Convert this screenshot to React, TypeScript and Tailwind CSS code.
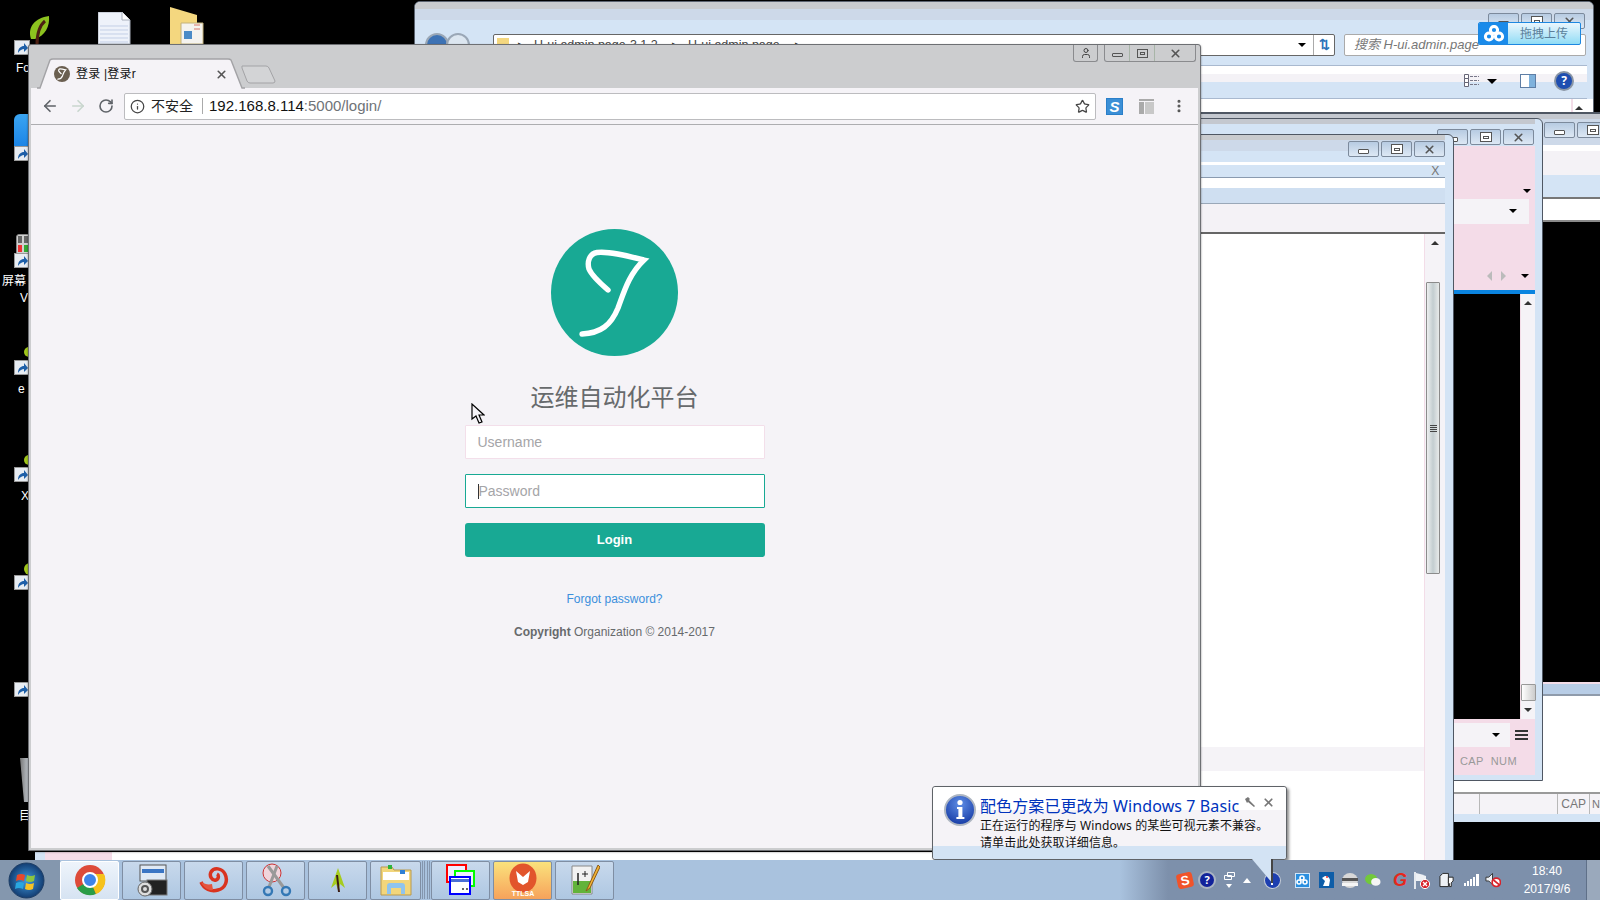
import { ArrowLeft, ArrowRight, Info, MoreVertical, RotateCw, Star, User, X } from 'lucide-react';

const cjk = "font-['Liberation_Sans','Noto_Sans_CJK_SC',sans-serif]";

function CaptionBtn({ kind, className = '' }: { kind: 'min' | 'max' | 'close'; className?: string }) {
  return (
    <div className={`flex h-[16px] w-[31px] items-center justify-center rounded-[2px] border border-[#7c8a9c] bg-gradient-to-b from-[#b7cbe2] to-[#dde8f4] ${className}`}>
      {kind === 'min' && <div className="mt-1 h-[5px] w-[11px] rounded-[1px] border border-[#555] bg-white" />}
      {kind === 'max' && <div className="flex h-[10px] w-[12px] items-center justify-center border border-[#555] bg-white"><div className="h-[3px] w-[6px] border border-[#555]" /></div>}
      {kind === 'close' && <X size={13} strokeWidth={3} className="text-[#555]" />}
    </div>
  );
}

function Caret({ className = '' }: { className?: string }) {
  return <div className={`absolute h-0 w-0 border-x-[4px] border-t-[4px] border-x-transparent border-t-black ${className}`} />;
}

function Shortcut({ top }: { top: string }) {
  return (
    <div className={`absolute left-[14px] flex h-[15px] w-[16px] items-center justify-center border border-[#999] bg-[#e8edf3] ${top}`}>
      <svg width="12" height="12" viewBox="0 0 12 12"><path d="M2 11C2 6 5 4 8 4V1l4 5-4 4V7C6 7 4 8 2 11z" fill="#1d5fa8" /></svg>
    </div>
  );
}

function DesktopIcons() {
  return (
    <>
      <svg className="absolute left-[27px] top-[15px]" width="24" height="30" viewBox="0 0 24 30">
        <path d="M4 24C0 12 8 3 22 1c1 10-4 20-14 23z" fill="#8cc21f" />
        <path d="M10 30C10 18 13 10 18 6" stroke="#4c1f12" strokeWidth="3" fill="none" />
      </svg>
      <svg className="absolute left-[98px] top-[12px]" width="33" height="32" viewBox="0 0 33 32">
        <path d="M0 0h24l8 8v24H0z" fill="#eef2fa" stroke="#a9b0bc" />
        <path d="M2 14h28M2 18h28M2 22h28M2 26h28M2 30h28" stroke="#c3cfe6" />
        <path d="M24 0v8h8" fill="#fff" stroke="#a9b0bc" />
      </svg>
      <svg className="absolute left-[170px] top-[7px]" width="34" height="37" viewBox="0 0 34 37">
        <path d="M0 0l27 8v29H0z" fill="#f4d77f" />
        <path d="M11 16h22v21H11z" fill="#f5f3ef" stroke="#c4b27c" />
        <path d="M14 24h8v8h-8z" fill="#4b8bc7" />
        <path d="M24 18h6M24 22h6" stroke="#d8776b" />
      </svg>
      <div className="absolute left-[14px] top-[114px] h-[32px] w-[16px] rounded-tl-[6px] bg-gradient-to-b from-[#3ba5f2] to-[#1b85e6]" />
      <div className="absolute left-[16px] top-[234px] grid h-[20px] w-[14px] grid-cols-2 gap-[2px] rounded-tl-[3px] border border-[#888] bg-[#d0d0d0] p-[1px]">
        <div className="bg-[#666]" /><div className="bg-[#666]" /><div className="bg-[#e33]" /><div className="bg-[#3a3]" />
      </div>
      <div className="absolute left-[24px] top-[347px] h-[10px] w-[6px] rounded-l-full bg-[#a3c91c]" />
      <div className="absolute left-[24px] top-[455px] h-[10px] w-[6px] rounded-l-full bg-[#a3c91c]" />
      <div className="absolute left-[24px] top-[563px] h-[12px] w-[6px] rounded-l-full bg-[#a3c91c]" />
      <div className="absolute left-[20px] top-[758px] h-[44px] w-[10px] bg-gradient-to-r from-[#777] to-[#cfd6de] [clip-path:polygon(0_0,100%_0,100%_100%,40%_100%)]" />
      {['top-[40px]', 'top-[146px]', 'top-[253px]', 'top-[360px]', 'top-[467px]', 'top-[575px]', 'top-[682px]'].map(t => <Shortcut key={t} top={t} />)}
      <span className={`absolute left-[16px] top-[59px] text-[12px] text-white ${cjk}`}>Fo</span>
      <span className={`absolute left-[2px] top-[272px] text-[12px] text-white ${cjk}`}>屏幕</span>
      <span className={`absolute left-[20px] top-[289px] text-[12px] text-white ${cjk}`}>V</span>
      <span className={`absolute left-[18px] top-[380px] text-[12px] text-white ${cjk}`}>e</span>
      <span className={`absolute left-[21px] top-[487px] text-[12px] text-white ${cjk}`}>X</span>
      <span className={`absolute left-[19px] top-[807px] text-[12px] text-white ${cjk}`}>目</span>
    </>
  );
}

function ExplorerWindow() {
  return (
    <div className="absolute left-[414px] top-[1px] flex h-[140px] w-[1180px] flex-col overflow-hidden rounded-t-[6px] border border-[#5c6470] bg-[#d4e4f5]">
      <div className="h-[7px] shrink-0 bg-[#c9cbce]" />
      <div className="h-[11px] shrink-0 bg-[#cdd9e9]" />
      <div className="absolute right-[8px] top-[11px] flex gap-[2px]">
        <CaptionBtn kind="min" /><CaptionBtn kind="max" /><CaptionBtn kind="close" />
      </div>
      <div className="flex h-[43px] shrink-0 items-center pl-[10px] pr-[7px] pt-[7px]">
        <div className="h-[24px] w-[24px] rounded-full border-2 border-[#9aa7b6] bg-[#3d72b4]" />
        <div className="-ml-[3px] h-[24px] w-[24px] rounded-full border-2 border-[#9aa7b6] bg-[#dce6f0]" />
        <div className="relative ml-[23px] flex h-[22px] w-[842px] items-center rounded-[2px] border border-[#666] bg-white pl-[3px]">
          <div className="h-[14px] w-[12px] bg-[#f4d77f]" />
          <span className="ml-[9px] text-[13px] text-[#333]">▸</span>
          <span className={`ml-[9px] w-[138px] whitespace-nowrap text-[12.5px] text-[#444] ${cjk}`}>H-ui.admin.page-3.1.2</span>
          <span className="text-[13px] text-[#333]">▸</span>
          <span className={`ml-[9px] w-[107px] whitespace-nowrap text-[12.5px] text-[#444] ${cjk}`}>H-ui.admin.page</span>
          <span className="text-[13px] text-[#333]">▸</span>
          <Caret className="right-[28px] top-[8px] border-t-[#123]" />
          <div className="absolute right-0 top-0 flex h-full w-[21px] items-center justify-center border-l border-[#aaa] text-[13px] font-bold text-[#2b72b8]">⇅</div>
        </div>
        <div className="ml-[9px] flex h-[22px] w-[242px] items-center rounded-[2px] border border-[#aaa] bg-white pl-[9px]">
          <span className={`text-[13px] italic text-[#777] ${cjk}`}>搜索 H-ui.admin.page</span>
        </div>
      </div>
      <div className="h-[2px] shrink-0" />
      <div className="relative mr-[6px] shrink-0 border-y border-[#a9b9cf]">
        <div className="h-[8px] bg-white" />
        <div className="h-[8px] bg-[#f4f2f6]" />
        <div className="h-[16px] bg-[#d4e4f5]" />
        <svg className="absolute right-[107px] top-[8px]" width="16" height="14" viewBox="0 0 16 14">
          <path d="M0.5 0.5h4v4h-4zM0.5 4.5h4v4h-4zM0.5 8.5h4v4h-4z" fill="#fff" stroke="#667" />
          <path d="M6 2.5h9M6 6.5h9M6 10.5h9" stroke="#778" strokeDasharray="3 1" />
        </svg>
        <Caret className="right-[90px] top-[13px] border-x-[5px] border-t-[5px] border-t-[#123070]" />
        <div className="absolute right-[51px] top-[8px] flex h-[14px] w-[16px] border border-[#5e7ea5] bg-white">
          <div className="flex-1" />
          <div className="w-[6px] bg-[#7fb2dc]" />
        </div>
        <div className="absolute right-[15px] top-[7px] flex h-[16px] w-[16px] items-center justify-center rounded-full bg-[#1f4eb0] text-[12px] font-bold text-white ring-2 ring-[#8a96a5]">?</div>
      </div>
      <div className="relative flex-1 bg-white">
        <div className="absolute right-[20px] top-0 h-full w-[2px] bg-[#f3dde8]" />
        <div className="absolute right-[10px] top-[7px] h-0 w-0 border-x-[4px] border-b-[4px] border-x-transparent border-b-[#333]" />
      </div>
    </div>
  );
}

function RearRightWindow() {
  return (
    <div className="absolute left-[1190px] top-[112px] flex h-[710px] w-[410px] flex-col border-t-2 border-[#4f5763] bg-[#d4e4f5]">
      <div className="h-[5px] bg-[#c4c8cf]" />
      <div className="relative h-[26px] bg-[#cdd9e9]">
        <div className="absolute left-[354px] top-[3px] flex gap-[2px]"><CaptionBtn kind="min" /><CaptionBtn kind="max" /></div>
      </div>
      <div className="h-[6px] bg-white" />
      <div className="h-[24px] bg-[#f4f2f6]" />
      <div className="h-[22px] bg-[#d4e4f5]" />
      <div className="h-[2px] bg-[#777]" />
      <div className="h-[21px] bg-white" />
      <div className="h-[2px] bg-[#8a8a8a]" />
      <div className="h-[460px] bg-black" />
      <div className="h-[2px] bg-[#f3dde8]" />
      <div className="h-[10px] bg-[#b8cde6]" />
      <div className="h-[2px] bg-[#8f9bab]" />
      <div className="h-[96px] bg-white" />
      <div className="h-[2px] bg-[#9a9a9a]" />
      <div className="flex h-[20px] items-center bg-[#f5f3f7]">
        <div className="ml-[289px] h-full w-[81px] border-x border-[#b8b8b8]" />
        <span className={`ml-[3px] text-[12px] text-[#777] ${cjk}`}>CAP</span>
        <div className="ml-[3px] h-full w-0 border-l border-[#b8b8b8]" />
        <span className={`ml-[2px] text-[11px] text-[#777] ${cjk}`}>N</span>
      </div>
      <div className="flex-1 bg-[#d4e4f5]" />
    </div>
  );
}

function PinkWindow() {
  return (
    <div className="absolute left-[1190px] top-[118px] flex h-[663px] w-[353px] flex-col rounded-tr-[6px] border border-[#4f5763] bg-[#d4e4f5] pr-[7px]">
      <div className="absolute right-[8px] top-[10px] flex gap-[2px]">
        <CaptionBtn kind="min" /><CaptionBtn kind="max" /><CaptionBtn kind="close" />
      </div>
      <div className="h-[5px] shrink-0 bg-[#c4c8cf]" />
      <div className="h-[22px] shrink-0" />
      <div className="relative h-[144px] shrink-0 bg-[#f4dce8]">
        <Caret className="right-[4px] top-[43px]" />
        <div className="absolute right-[6px] top-[53px] h-[25px] w-[100px] bg-[#f5f3f7]" />
        <Caret className="right-[18px] top-[63px]" />
        <div className="absolute right-[43px] top-[125px] h-0 w-0 border-y-[5px] border-r-[5px] border-y-transparent border-r-[#bbb]" />
        <div className="absolute right-[29px] top-[125px] h-0 w-0 border-y-[5px] border-l-[5px] border-y-transparent border-l-[#bbb]" />
        <Caret className="right-[6px] top-[128px]" />
      </div>
      <div className="h-[4px] shrink-0 bg-[#0a84e0]" />
      <div className="flex h-[425px] shrink-0">
        <div className="flex-1 bg-black" />
        <div className="relative w-[15px] border-l border-[#f3dde8] bg-[#f5f3f7]">
          <div className="absolute left-[3px] top-[7px] h-0 w-0 border-x-[4px] border-b-[4px] border-x-transparent border-b-[#333]" />
          <div className="absolute bottom-[18px] left-0 h-[17px] w-[15px] rounded-[1px] border border-[#999] bg-gradient-to-r from-white to-[#ccc]" />
          <div className="absolute bottom-[7px] left-[3px] h-0 w-0 border-x-[4px] border-t-[4px] border-x-transparent border-t-[#333]" />
        </div>
      </div>
      <div className="relative flex-1 bg-[#f4dce8]">
        <div className="absolute right-[25px] top-[4px] h-[24px] w-[100px] bg-[#f5f3f7]" />
        <Caret className="right-[35px] top-[14px]" />
        <div className="absolute right-[7px] top-[11px] flex w-[13px] flex-col gap-[2px]">
          <div className="h-[2px] bg-[#333]" /><div className="h-[2px] bg-[#333]" /><div className="h-[2px] bg-[#333]" />
        </div>
        <span className={`absolute left-[269px] top-[34px] text-[11px] tracking-[0.4px] text-[#999] ${cjk}`}>CAP&nbsp;&nbsp;NUM</span>
      </div>
      <div className="h-[5px] shrink-0" />
    </div>
  );
}

function EditorWindow() {
  return (
    <div className="absolute left-[1160px] top-[134px] flex h-[730px] w-[294px] flex-col rounded-tr-[6px] border border-[#4f5763] bg-[#d4e4f5] pr-[8px]">
      <div className="h-[5px] shrink-0 bg-[#c9cbce]" />
      <div className="h-[11px] shrink-0 bg-[#cdd9e9]" />
      <div className="absolute right-[8px] top-[6px] flex gap-[2px]">
        <CaptionBtn kind="min" /><CaptionBtn kind="max" /><CaptionBtn kind="close" />
      </div>
      <div className="h-[11px] shrink-0" />
      <div className="h-[3px] shrink-0 bg-white" />
      <div className="flex h-[13px] shrink-0 items-center justify-end border-b border-[#8a9bb0] bg-[#d4e4f5] pr-[6px] text-[13px] text-[#777]">X</div>
      <div className="h-[10px] shrink-0 bg-white" />
      <div className="h-[15px] shrink-0 bg-[#cfdff1]" />
      <div className="h-[29px] shrink-0 border-t border-[#9aa8b8] bg-[#f4f2f6]" />
      <div className="h-[2px] shrink-0 bg-[#666]" />
      <div className="flex min-h-0 flex-1">
        <div className="flex flex-1 flex-col bg-white">
          <div className="flex-1" />
          <div className="h-[24px] bg-[#f5f3f7]" />
          <div className="h-[92px]" />
        </div>
        <div className="relative w-[21px] border-l border-[#f3dde8] bg-[#f5f3f7]">
          <div className="absolute left-[6px] top-[7px] h-0 w-0 border-x-[4px] border-b-[4px] border-x-transparent border-b-[#333]" />
          <div className="absolute left-[1px] top-[48px] flex h-[292px] w-[14px] items-center justify-center rounded-[1px] border border-[#8b8b8b] bg-gradient-to-r from-[#eef0f0] via-[#c3cdd0] to-[#e8eaea]">
            <div className="flex w-[7px] flex-col gap-[1px]">
              <div className="h-[1px] bg-[#444]" /><div className="h-[1px] bg-[#444]" /><div className="h-[1px] bg-[#444]" /><div className="h-[1px] bg-[#444]" />
            </div>
          </div>
        </div>
      </div>
    </div>
  );
}

function Logo({ size, bg, width = 5.4 }: { size: number; bg: string; width?: number }) {
  return (
    <svg width={size} height={size} viewBox="0 0 127 127" className="block shrink-0">
      <circle cx="63.5" cy="63.5" r="63.5" fill={bg} />
      <path d="M31 105C50 104 60 96 67 79C73 63 78 45 93 31C77 27 58 22 46 23.5C38 25 36 33 38 40C41 47 50 55 57 61" fill="none" stroke="#fff" strokeWidth={width} strokeLinecap="round" strokeLinejoin="miter" />
    </svg>
  );
}

function BrowserWindow() {
  return (
    <div className="absolute left-[28px] top-[44px] flex h-[807px] w-[1173px] flex-col rounded-t-[3px] border border-[#6d6f73] bg-[#cccdcf] px-[2px] pb-[2px] shadow-[0_1px_2px_rgba(0,0,0,0.5)]">
      <div className="relative h-[43px] shrink-0">
        <svg className="absolute left-[6px] top-[13px]" width="208" height="31" viewBox="0 0 208 31">
          <path d="M0 30h3L13 2q1-1 3-1h175q2 0 3 1l11 28h3" fill="#f5f3f7" stroke="#a3a3a6" strokeWidth="1.4" />
        </svg>
        <svg className="absolute left-[210px] top-[20px]" width="36" height="19" viewBox="0 0 36 19">
          <path d="M1 1h24q2 0 3 2l6 13q0 2-2 2H9q-2 0-3-2L1 3z" fill="#d3d4d6" stroke="#a3a3a6" />
        </svg>
        <div className="absolute left-[23px] top-[20px] flex h-[18px] items-center gap-[6px]">
          <Logo size={16} bg="#6a5f50" width={10} />
          <span className={`text-[12px] tracking-[0.2px] text-[#111] ${cjk}`}>登录 |登录r</span>
        </div>
        <X size={13} strokeWidth={3} className="absolute left-[184px] top-[23px] text-[#555]" />
        <div className="absolute right-[2px] top-[0px] flex gap-[6px]">
          <div className="flex h-[17px] w-[25px] items-center justify-center rounded-b-[3px] border border-t-0 border-[#8a8b8e]">
            <User size={12} strokeWidth={2} className="text-[#444]" />
          </div>
          <div className="flex h-[17px] w-[92px] rounded-b-[3px] border border-t-0 border-[#8a8b8e]">
            <div className="flex w-[25px] items-center justify-center border-r border-[#a8b5a8]"><div className="mt-1 h-[4px] w-[11px] rounded-[1px] border border-[#555]" /></div>
            <div className="flex w-[25px] items-center justify-center border-r border-[#a8b5a8]"><div className="flex h-[9px] w-[11px] items-center justify-center border border-[#555]"><div className="h-[3px] w-[5px] border border-[#555]" /></div></div>
            <div className="flex flex-1 items-center justify-center"><X size={13} strokeWidth={3} className="text-[#555]" /></div>
          </div>
        </div>
      </div>
      <div className="flex h-[37px] shrink-0 items-center border-b border-[#adadb0] bg-[#f5f3f7]">
        <ArrowLeft size={18} strokeWidth={2.2} className="ml-[10px] text-[#5f6368]" />
        <ArrowRight size={18} strokeWidth={2.2} className="ml-[10px] text-[#c9d6ce]" />
        <RotateCw size={16} strokeWidth={2.4} className="ml-[11px] text-[#5f6368]" />
        <div className="ml-[10px] flex h-[27px] w-[972px] items-center rounded-[2px] border border-[#bcbcbf] bg-white">
          <Info size={15} strokeWidth={2} className="ml-[5px] text-[#444]" />
          <span className={`ml-[6px] text-[14px] text-[#222] ${cjk}`}>不安全</span>
          <div className="ml-[9px] h-[16px] w-px bg-[#aaa]" />
          <span className="ml-[6px] font-['Liberation_Sans',sans-serif] text-[15px] text-[#111]">192.168.8.114<span className="text-[#6f7377]">:5000/login/</span></span>
          <Star size={15} strokeWidth={2} className="ml-auto mr-[5px] text-[#444]" />
        </div>
        <div className="ml-[10px] flex h-[17px] w-[17px] items-center justify-center border border-[#2a7fc9] bg-[#3b8fd6]">
          <span className="font-['Liberation_Sans',sans-serif] text-[15px] font-bold italic leading-none text-white">S</span>
        </div>
        <div className="ml-[16px] flex h-[15px] w-[15px] flex-col gap-[1px]">
          <div className="h-[2px] bg-[#aaa]" />
          <div className="flex flex-1 gap-[1px]"><div className="w-[5px] bg-[#aaa]" /><div className="flex-1 bg-[#c8c8c8]" /></div>
        </div>
        <MoreVertical size={16} strokeWidth={2.6} className="ml-[17px] text-[#555]" />
      </div>
      <div className="relative flex min-h-0 flex-1 flex-col items-center bg-[#f5f3f7] pt-[104px] font-['Liberation_Sans','Noto_Sans_CJK_SC',sans-serif] text-[#676a6c]">
        <Logo size={127} bg="#18a994" />
        <h3 className="mt-[28px] text-[24px] leading-[28px] text-[#676a6c]">运维自动化平台</h3>
        <input readOnly placeholder="Username" className="mt-[13px] h-[34px] w-[300px] rounded-[1px] border border-[#f3dfea] bg-white px-[12px] text-[14px] outline-none placeholder:text-[#a5a5a8]" />
        <div className="mt-[15px] flex h-[34px] w-[300px] items-center rounded-[1px] border border-[#18a994] bg-white px-[12px]">
          <div className="h-[15px] w-px bg-[#333]" />
          <span className="text-[14px] text-[#a5a5a8]">Password</span>
        </div>
        <button className="mt-[15px] h-[34px] w-[300px] rounded-[3px] bg-[#18a994] text-[13px] font-bold text-white">Login</button>
        <a className="mt-[33px] text-[12px] leading-[18px] text-[#3b8fdc]">Forgot password?</a>
        <p className="mt-[15px] text-[12px] leading-[18px]"><strong>Copyright</strong> Organization © 2014-2017</p>
        <svg className="absolute left-[440px] top-[278px]" width="14" height="21" viewBox="0 0 14 21">
          <path d="M1 1v15l4-3 3 7 3-1-3-7h5z" fill="#f5f3f7" stroke="#000" strokeWidth="1.2" />
        </svg>
      </div>
    </div>
  );
}

function Balloon() {
  return (
    <div className="absolute left-[932px] top-[786px] flex h-[74px] w-[355px] flex-col rounded-[3px] border border-[#5f6368] bg-[#f5f3f7] shadow-[2px_2px_3px_rgba(0,0,0,0.45)]">
      <div className="h-[23px] rounded-t-[3px] bg-white" />
      <div className="flex-1" />
      <div className="h-[13px] rounded-b-[3px] bg-[#d3e3f4]" />
      <svg className="absolute left-[11px] top-[7px]" width="32" height="32" viewBox="0 0 32 32">
        <defs>
          <radialGradient id="ib" cx="0.5" cy="0.3" r="0.8"><stop offset="0" stopColor="#5f8ee6" /><stop offset="1" stopColor="#0c2f9c" /></radialGradient>
        </defs>
        <circle cx="16" cy="16" r="15" fill="url(#ib)" stroke="#aeb6c2" strokeWidth="2" />
        <circle cx="16" cy="8.5" r="2.6" fill="#fff" />
        <path d="M13 13h5.4v10h2v2h-8v-2h2v-8h-1.4z" fill="#fff" />
      </svg>
      <div className="absolute left-[47px] top-[8px] flex flex-col font-['Noto_Sans','Noto_Sans_CJK_SC',sans-serif] whitespace-nowrap">
        <span className="text-[16px] leading-[22px] tracking-[0.1px] text-[#0033bc]">配色方案已更改为 Windows 7 Basic</span>
        <span className="mt-[1px] text-[12px] leading-[16px] tracking-[0.1px] text-[#111]">正在运行的程序与 Windows 的某些可视元素不兼容。</span>
        <span className="mt-[1px] text-[12px] leading-[16px] tracking-[0.1px] text-[#111]">请单击此处获取详细信息。</span>
      </div>
      <svg className="absolute right-[30px] top-[9px]" width="12" height="12" viewBox="0 0 12 12">
        <path d="M1 3l3-2 2 2-1 1 6 6-1 1-6-5-1 1z" fill="#777" />
      </svg>
      <X size={13} strokeWidth={3.2} className="absolute right-[11px] top-[9px] text-[#777]" />
    </div>
  );
}

const taskBtn = 'flex h-[39px] w-[59px] ml-[3px] items-center justify-center rounded-[2px] border border-[#7f8ea3] bg-gradient-to-b from-[#c8d9ec] to-[#aec7e2]';
const traySlot = 'flex w-[16px] shrink-0 items-center justify-center';

function Taskbar() {
  return (
    <div className="relative flex h-[40px] shrink-0 items-center bg-gradient-to-r from-[#a9c2de] from-70% to-[#7d90ab] to-[73%]">
      <div className="flex h-full w-[60px] shrink-0 items-center bg-[#8497ae] pl-[8px]">
        <svg width="37" height="37" viewBox="0 0 37 37">
          <defs><radialGradient id="orb" cx="0.5" cy="0.5" r="0.6"><stop offset="0" stopColor="#3f9be0" /><stop offset="1" stopColor="#0a2a5c" /></radialGradient></defs>
          <circle cx="18.5" cy="18.5" r="17.5" fill="url(#orb)" stroke="#1f3f66" />
          <path d="M9 13q4-2 8 0l-1 6q-4-2-8 0z" fill="#e8492b" />
          <path d="M19 13q4 2 8 0l-1 6q-4 2-8 0z" fill="#8cc63f" />
          <path d="M8 21q4-2 8 0l-1 6q-4-2-8 0z" fill="#29a7e1" />
          <path d="M18 21q4 2 8 0l-1 6q-4 2-8 0z" fill="#f7c325" />
        </svg>
      </div>
      <div className={`${taskBtn} !ml-0 border-[#fff] !from-[#eef4fb] !to-[#d6e3f2]`}>
        <svg width="32" height="32" viewBox="0 0 32 32">
          <circle cx="16" cy="16" r="15" fill="#dd4b39" />
          <path d="M16 16L3 24A15 15 0 0 0 22 30z" fill="#2a9d47" />
          <path d="M16 16l6 14A15 15 0 0 0 30 10H16z" fill="#f6c21b" />
          <circle cx="16" cy="16" r="7" fill="#3f84e8" stroke="#fff" strokeWidth="2" />
        </svg>
      </div>
      <div className={taskBtn}>
        <svg width="34" height="34" viewBox="0 0 34 34">
          <rect x="5" y="2" width="26" height="16" fill="#dfe9f5" stroke="#555" />
          <rect x="7" y="6" width="22" height="4" fill="#3a75c4" />
          <rect x="12" y="17" width="20" height="15" fill="#222" stroke="#777" />
          <circle cx="10" cy="26" r="7" fill="#ddd" stroke="#666" />
          <circle cx="10" cy="26" r="3" fill="none" stroke="#555" strokeWidth="2" />
        </svg>
      </div>
      <div className={taskBtn}>
        <svg width="30" height="26" viewBox="0 0 30 26">
          <path d="M2 15c3 7 10 10 17 8 8-2 10-10 7-16C23 1 15 0 12 5c-2 4 1 9 5 8 3-1 3-5 1-6" fill="none" stroke="#d9331f" strokeWidth="3.5" />
          <path d="M2 15c4 2 7 3 11 2l1 6c-5 1-10-3-12-8z" fill="#e4553f" />
        </svg>
      </div>
      <div className={taskBtn}>
        <svg width="32" height="34" viewBox="0 0 32 34">
          <circle cx="12" cy="10" r="9" fill="#f0d5dc" stroke="#c33" />
          <path d="M8 3l16 22" stroke="#999" strokeWidth="3" />
          <path d="M17 3L9 24" stroke="#999" strokeWidth="3" />
          <circle cx="8" cy="28" r="4" fill="none" stroke="#3478b5" strokeWidth="2.4" />
          <circle cx="26" cy="28" r="4" fill="none" stroke="#3478b5" strokeWidth="2.4" />
        </svg>
      </div>
      <div className={taskBtn}>
        <svg width="16" height="24" viewBox="0 0 16 24">
          <path d="M8 0l7 20-5-4-2 6-2-6-5 4z" fill="#a6cc1e" />
          <path d="M7 7l2 17" stroke="#3a1c12" strokeWidth="2" />
        </svg>
      </div>
      <div className={`${taskBtn} !w-[51px]`}>
        <svg width="32" height="32" viewBox="0 0 32 32">
          <path d="M1 3h11l2 3h17v25H1z" fill="#f2d67c" stroke="#b99a4e" />
          <rect x="3" y="8" width="26" height="8" fill="#fff" />
          <rect x="8" y="1" width="4" height="4" fill="#2db33a" />
          <rect x="20" y="6" width="5" height="4" fill="#2f80d6" />
          <path d="M7 30v-8q0-3 3-3h12q3 0 3 3v8h-4v-6H11v6z" fill="#8fc4ee" />
        </svg>
      </div>
      <div className="ml-[1px] h-[38px] w-[3px] border-x border-[#8496ae]" />
      <div className="ml-[2px] h-[38px] w-[3px] border-x border-[#8496ae]" />
      <div className={`${taskBtn} !ml-[1px]`}>
        <svg width="30" height="32" viewBox="0 0 30 32">
          <rect x="1" y="1" width="19" height="17" fill="#eef" stroke="#f00" strokeWidth="2" />
          <rect x="9" y="7" width="19" height="15" fill="#eef" stroke="#0f0" strokeWidth="2" />
          <rect x="4" y="13" width="20" height="17" fill="#fff" stroke="#00f" strokeWidth="2" />
          <rect x="5" y="15" width="18" height="3" fill="#4a6fd6" />
          <path d="M16 25h2M20 25h2" stroke="#666" strokeWidth="2" />
        </svg>
      </div>
      <div className={`${taskBtn} !from-[#f9e27c] !to-[#f6a25b]`}>
        <svg width="34" height="36" viewBox="0 0 34 36">
          <ellipse cx="17" cy="16" rx="13.5" ry="14.5" fill="#e2552c" />
          <path d="M10 9l7 6 7-6-2 11-5 3-5-3z" fill="#fff" />
          <text x="17" y="34" textAnchor="middle" fontSize="7" fontWeight="700" fill="#fff" fontFamily="Liberation Sans, sans-serif">TTLSA</text>
        </svg>
      </div>
      <div className={taskBtn}>
        <svg width="30" height="34" viewBox="0 0 30 34">
          <path d="M2 3h20v28H2z" fill="#f2f2f2" stroke="#888" />
          <path d="M3 18h18v12H3z" fill="#62b33a" />
          <path d="M8 10v12" stroke="#222" strokeWidth="1.5" />
          <path d="M12 11h6M15 8v6" stroke="#222" />
          <path d="M28 2L18 24l-2 4 4-3L30 4z" fill="#f2b334" stroke="#8a5a1a" />
        </svg>
      </div>

      <div className="ml-auto flex h-full items-center">
        <div className={traySlot}>
          <div className={`flex h-[15px] w-[16px] -rotate-12 items-center justify-center rounded-[3px] bg-[#f0532a] text-[13px] font-bold text-white ${cjk}`}>S</div>
        </div>
        <div className={`${traySlot} ml-[6px]`}>
          <div className="flex h-[14px] w-[14px] items-center justify-center rounded-full bg-[#11229a] text-[11px] font-bold text-white ring-2 ring-[#aab4c2]">?</div>
        </div>
        <div className={`${traySlot} ml-[6px] flex-col gap-[4px]`}>
          <svg width="11" height="8" viewBox="0 0 11 8"><path d="M3.5 0.5h7v4h-7zM0.5 3.5h7v4h-7z" fill="#7d90ab" stroke="#fff" /></svg>
          <div className="h-0 w-0 border-x-[3px] border-t-[4px] border-x-transparent border-t-white" />
        </div>
        <div className={`${traySlot} ml-[2px]`}>
          <div className="h-0 w-0 border-x-[4px] border-b-[5px] border-x-transparent border-b-white" />
        </div>
        <div className={`${traySlot} ml-[9px]`}>
          <div className="flex h-[15px] w-[15px] items-center justify-center rounded-full bg-[#1d3fb0] ring-1 ring-[#c4ccd8]"><div className="h-[9px] w-[2px] bg-white" /></div>
        </div>
        <div className={`${traySlot} ml-[14px]`}>
          <div className="flex h-[15px] w-[15px] items-center justify-center border border-[#cfe6fa] bg-[#2a8fe0]">
            <svg width="12" height="10" viewBox="0 0 12 10"><g fill="none" stroke="#fff" strokeWidth="1.6"><circle cx="6" cy="3" r="2" /><circle cx="3" cy="7" r="2" /><circle cx="9" cy="7" r="2" /></g></svg>
          </div>
        </div>
        <div className={`${traySlot} ml-[8px]`}>
          <svg width="15" height="16" viewBox="0 0 15 16"><rect width="15" height="16" fill="#0d5da8" /><path d="M6 4q4 0 5 4l-1 6H4l2-5-3-3z" fill="#fff" /><circle cx="8" cy="5" r="1" fill="#e33" /></svg>
        </div>
        <div className={`${traySlot} ml-[8px]`}>
          <svg width="16" height="15" viewBox="0 0 16 15"><ellipse cx="8" cy="7.5" rx="8" ry="7.5" fill="#d8d8d8" /><rect y="5" width="16" height="3" fill="#555" /><rect y="10" width="16" height="3" fill="#f5f5f5" /></svg>
        </div>
        <div className={`${traySlot} ml-[7px]`}>
          <svg width="17" height="14" viewBox="0 0 17 14"><ellipse cx="6.5" cy="6" rx="6.5" ry="5.5" fill="#72c93a" /><ellipse cx="11.5" cy="9" rx="5" ry="4.2" fill="#f5f5f5" /></svg>
        </div>
        <div className={`${traySlot} ml-[11px]`}>
          <span className="font-['Liberation_Sans',sans-serif] text-[18px] font-bold italic leading-none text-[#e5281c]">G</span>
        </div>
        <div className={`${traySlot} ml-[6px]`}>
          <svg width="16" height="17" viewBox="0 0 16 17"><path d="M1 0v17" stroke="#fff" strokeWidth="1.6" /><path d="M2 1q5 1 10 3v5H2z" fill="#eef1f5" /><circle cx="11" cy="12" r="4.6" fill="#d8222a" stroke="#fff" /><path d="M9 10l4 4M13 10l-4 4" stroke="#fff" strokeWidth="1.4" /></svg>
        </div>
        <div className={`${traySlot} ml-[9px]`}>
          <svg width="17" height="16" viewBox="0 0 17 16"><path d="M1 4l3-3h6v14H1z" fill="#eef1f5" stroke="#222" /><path d="M10 5h5v4l-2 2v4h-2v-3l-1-1z" fill="#fff" stroke="#222" /></svg>
        </div>
        <div className={`${traySlot} ml-[8px]`}>
          <div className="flex h-[12px] items-end gap-[1px]">
            <div className="h-[3px] w-[2px] bg-white" /><div className="h-[5px] w-[2px] bg-white" /><div className="h-[7px] w-[2px] bg-white" /><div className="h-[9px] w-[2px] bg-white" /><div className="h-[12px] w-[3px] bg-white" />
          </div>
        </div>
        <div className={`${traySlot} ml-[6px]`}>
          <svg width="17" height="16" viewBox="0 0 17 16"><path d="M1 5h3l4-4v12L4 9H1z" fill="#eef1f5" stroke="#333" /><circle cx="12" cy="10.5" r="4.4" fill="#fff" stroke="#d8222a" strokeWidth="1.8" /><path d="M9 8l6 5" stroke="#d8222a" strokeWidth="1.8" /></svg>
        </div>
        <div className={`ml-[10px] flex w-[72px] flex-col items-center text-[12px] leading-[18px] text-white ${cjk}`}>
          <span>18:40</span>
          <span>2017/9/6</span>
        </div>
        <div className="ml-[3px] h-full w-[14px] border-l border-[#5f7088] bg-[#9aa9bc]" />
      </div>
    </div>
  );
}

export default function App() {
  return (
    <div className="flex h-[900px] w-[1600px] flex-col overflow-hidden bg-black">
      <div className="relative flex-1">
        <DesktopIcons />
        <ExplorerWindow />
        <RearRightWindow />
        <PinkWindow />
        <EditorWindow />
        <div className="absolute left-[1478px] top-[22px] flex h-[23px] w-[103px] overflow-hidden rounded-[2px] border border-[#1d87e0] bg-gradient-to-b from-[#eaf6fd] to-[#8fdcf5]">
          <div className="flex h-full w-[29px] items-center justify-center bg-[#1a8bea]">
            <svg width="22" height="17" viewBox="0 0 22 17"><g fill="none" stroke="#fff" strokeWidth="3"><circle cx="11" cy="5" r="3.6" /><circle cx="6" cy="11.5" r="3.6" /><circle cx="16" cy="11.5" r="3.6" /></g></svg>
          </div>
          <span className={`ml-[12px] text-[12px] leading-[22px] text-[#5b7f9a] ${cjk}`}>拖拽上传</span>
        </div>
        <div className="absolute left-[35px] top-[852px] flex h-[8px] w-[1000px]">
          <div className="w-[10px] bg-[#d4e4f5]" />
          <div className="w-[67px] bg-[#f4dce8]" />
          <div className="flex-1 bg-white" />
        </div>
        <BrowserWindow />
        <Balloon />
        <div className="absolute left-[1252px] top-[859px] z-10 h-[25px] w-[21px] bg-[#d3e3f4] [clip-path:polygon(0_0,100%_0,100%_100%)]" />
        <div className="absolute left-[1271px] top-[859px] z-10 h-[24px] w-[2px] bg-[#444]" />
      </div>
      <Taskbar />
    </div>
  );
}
